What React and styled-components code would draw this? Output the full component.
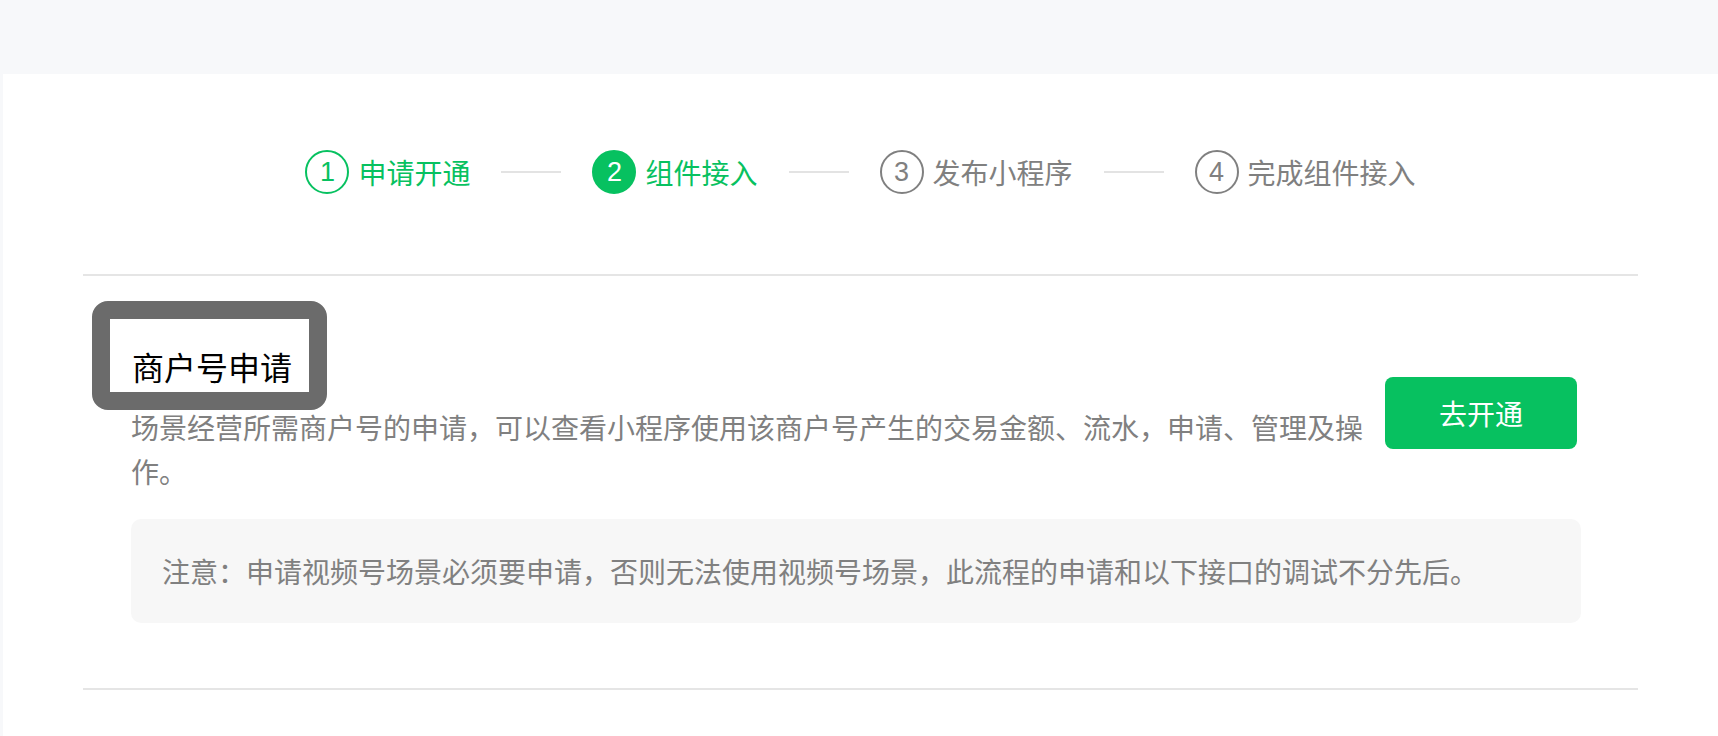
import React from "react";
import styled, { createGlobalStyle, css } from "styled-components";

const GlobalStyle = createGlobalStyle`
  html, body {
    margin: 0;
    padding: 0;
    background: #f7f8fa;
  }
  body {
    font-family: "PingFang SC", "Noto Sans CJK SC", "Noto Sans", sans-serif;
  }
  * {
    box-sizing: border-box;
  }
`;

const GREEN = "#07c160";
const GREY = "#808080";

const Page = styled.div`
  min-height: 100vh;
  display: flex;
  flex-direction: column;
`;

const TopBar = styled.div`
  height: 74px;
  flex: none;
`;

const Panel = styled.div`
  flex: 1;
  margin-left: 3px;
  padding: 0 80px;
  background: #fff;
`;

const StepsBar = styled.div`
  display: flex;
  justify-content: center;
  align-items: center;
  padding: 76px 0 80px;
  border-bottom: 2px solid #e5e5e5;
`;

const Step = styled.div`
  display: flex;
  align-items: center;
  gap: 9px;
  color: ${(p) => (p.$active ? GREEN : GREY)};
`;

const StepIndex = styled.span`
  width: 44px;
  height: 44px;
  border-radius: 50%;
  border: 2px solid currentColor;
  display: flex;
  align-items: center;
  justify-content: center;
  font-family: "Liberation Sans", "Noto Sans", sans-serif;
  font-size: 27px;
  line-height: 1;
  ${(p) =>
    p.$current &&
    css`
      background: ${GREEN};
      border-color: ${GREEN};
      color: #fff;
    `}
`;

const StepLabel = styled.span`
  font-size: 28px;
  line-height: 44px;
`;

const Connector = styled.span`
  width: 60px;
  height: 2px;
  margin: 0 31px;
  background: #e3e3e3;
`;

const Section = styled.section`
  padding: 25px 57px 65px 48px;
  border-bottom: 2px solid #e5e5e5;
`;

const IntroRow = styled.div`
  display: flex;
  align-items: flex-start;
`;

const IntroText = styled.div`
  flex: 1;
  min-width: 0;
`;

const Title = styled.h3`
  width: fit-content;
  margin: 0 0 -5px -39px;
  padding: 31px 17px 10px 22px;
  border: 18px solid #6b6b6b;
  border-radius: 16px;
  font-size: 32px;
  line-height: 32px;
  font-weight: 400;
  color: #000;
`;

const Description = styled.p`
  margin: 0;
  font-size: 28px;
  line-height: 44px;
  color: ${GREY};
`;

const ActionButton = styled.button`
  flex: none;
  width: 192px;
  height: 72px;
  margin: 76px 4px 0 20px;
  border: none;
  border-radius: 8px;
  background: ${GREEN};
  color: #fff;
  font-family: inherit;
  font-size: 28px;
  cursor: pointer;
`;

const Notice = styled.div`
  margin-top: 26px;
  padding: 30px 31px;
  border-radius: 10px;
  background: #f7f7f7;
  font-size: 28px;
  line-height: 44px;
  color: ${GREY};
`;

const steps = [
  { label: "申请开通", state: "done" },
  { label: "组件接入", state: "current" },
  { label: "发布小程序", state: "todo" },
  { label: "完成组件接入", state: "todo" },
];

const App = () => {
  return (
    <Page>
      <GlobalStyle />
      <TopBar />
      <Panel>
        <StepsBar>
          {steps.map((s, i) => (
            <React.Fragment key={s.label}>
              {i > 0 && <Connector />}
              <Step $active={s.state !== "todo"}>
                <StepIndex $current={s.state === "current"}>{i + 1}</StepIndex>
                <StepLabel>{s.label}</StepLabel>
              </Step>
            </React.Fragment>
          ))}
        </StepsBar>

        <Section>
          <IntroRow>
            <IntroText>
              <Title>商户号申请</Title>
              <Description>
                场景经营所需商户号的申请，可以查看小程序使用该商户号产生的交易金额、流水，申请、管理及操作。
              </Description>
            </IntroText>
            <ActionButton>去开通</ActionButton>
          </IntroRow>
          <Notice>
            注意：申请视频号场景必须要申请，否则无法使用视频号场景，此流程的申请和以下接口的调试不分先后。
          </Notice>
        </Section>
      </Panel>
    </Page>
  );
};

export default App;
